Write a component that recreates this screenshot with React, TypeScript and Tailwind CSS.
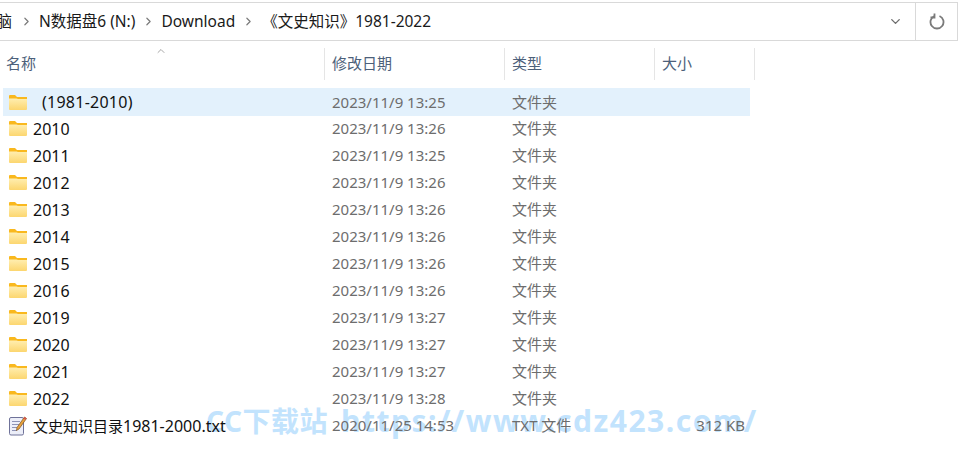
import React from 'react';
import { ChevronRight, ChevronDown, ChevronUp } from 'lucide-react';

const font = "font-['Noto_Sans','Noto_Sans_CJK_SC',sans-serif]";

interface Row {
  name: string;
  cjk?: string;
  date: string;
  type: string;
  size?: string;
  selected?: boolean;
  file?: boolean;
}

const rows: Row[] = [
  { name: '(1981-2010)', date: '2023/11/9 13:25', type: '文件夹', selected: true },
  { name: '2010', date: '2023/11/9 13:26', type: '文件夹' },
  { name: '2011', date: '2023/11/9 13:25', type: '文件夹' },
  { name: '2012', date: '2023/11/9 13:26', type: '文件夹' },
  { name: '2013', date: '2023/11/9 13:26', type: '文件夹' },
  { name: '2014', date: '2023/11/9 13:26', type: '文件夹' },
  { name: '2015', date: '2023/11/9 13:26', type: '文件夹' },
  { name: '2016', date: '2023/11/9 13:26', type: '文件夹' },
  { name: '2019', date: '2023/11/9 13:27', type: '文件夹' },
  { name: '2020', date: '2023/11/9 13:27', type: '文件夹' },
  { name: '2021', date: '2023/11/9 13:27', type: '文件夹' },
  { name: '2022', date: '2023/11/9 13:28', type: '文件夹' },
  { cjk: '文史知识目录', name: '1981-2000.txt', date: '2020/11/25 14:53', type: 'TXT 文件', size: '312 KB', file: true },
];

const FolderIcon = () => (
  <svg width="18" height="15" viewBox="0 0 18 15" className="shrink-0">
    <defs>
      <linearGradient id="folderFill" x1="0" y1="0" x2="0" y2="1">
        <stop offset="0" stopColor="#ffeeb0" />
        <stop offset="1" stopColor="#fcd66f" />
      </linearGradient>
    </defs>
    <path d="M0 1 Q0 0 1 0 H6 L8 2 H18 V5 H0 Z" fill="#f9b81e" />
    <path d="M0 3.5 H7.5 L9 4 H18 V14 Q18 15 17 15 H1 Q0 15 0 14 Z" fill="url(#folderFill)" />
  </svg>
);

const NoteIcon = () => (
  <svg width="18" height="20" viewBox="0 0 18 20" className="shrink-0">
    <rect x="0.5" y="1.5" width="14" height="17.5" rx="1.5" fill="#eceef8" stroke="#6f7299" />
    <path d="M3 5.5H11M3 8.5H10M3 11.5H8M3 14.5H8" stroke="#8e93b5" strokeWidth="1" />
    <path d="M15.5 1 L17.5 2.5 L10 13 L7.5 14.5 L8 11.5 Z" fill="#e8a33c" stroke="#7a4f1d" strokeWidth="0.7" />
    <path d="M15.5 1 L17.5 2.5 L16.5 4 L14.4 2.5 Z" fill="#d9534f" />
  </svg>
);

const RefreshIcon = () => (
  <svg width="16" height="17" viewBox="0 0 16 17" fill="none" className="text-[#7a7a7a]">
    <path d="M10.5 3 A6.5 6.5 0 1 1 5.5 3" stroke="currentColor" strokeWidth="1.8" />
    <path d="M5.5 0.5 V4.5 H1.5" stroke="currentColor" strokeWidth="1.8" />
  </svg>
);

const Crumb = ({ children }: { children: React.ReactNode }) => (
  <div className="flex items-center gap-[7px]">
    <span className="whitespace-nowrap">{children}</span>
    <ChevronRight className="w-[13px] h-[13px] text-[#7a7a7a]" strokeWidth={2.2} />
  </div>
);

const HeaderCell = ({ label, width, inset = 'pl-[7px]' }: { label: string; width: string; inset?: string }) => (
  <div className={`${width} ${inset} h-[32px] border-r border-[#e5e5e5] pb-[1px] flex items-center text-[15px] text-[#4c607a]`}>
    {label}
  </div>
);

export default function App() {
  return (
    <div className={`relative w-[962px] h-[453px] overflow-hidden bg-white ${font}`}>
      {/* Address bar */}
      <div className="pt-[2px] pr-[4px]">
        <div className="h-[39px] flex items-center border-t border-b border-r border-[#d9d9d9] text-[15.5px] text-[#1a1a1a]">
          <div className="flex-1 flex items-center min-w-0 overflow-hidden gap-[6px]">
            <Crumb><span className="block w-[13px] pr-[1px] text-right" dir="rtl">脑</span></Crumb>
            <Crumb>N数据盘6 (N:)</Crumb>
            <Crumb>Download</Crumb>
            <span className="whitespace-nowrap ml-[1px]">《文史知识》1981-2022</span>
          </div>
          <ChevronDown className="w-[15px] h-[15px] mr-[12px] text-[#6d6d6d]" strokeWidth={2.2} />
          <div className="w-[42px] h-full border-l border-[#d9d9d9] flex items-center justify-center">
            <RefreshIcon />
          </div>
        </div>
      </div>

      {/* Column headers */}
      <div className="relative mt-[7px] flex">
        <ChevronUp className="absolute left-[155px] -top-[3px] w-[12px] h-[12px] text-[#8a8a8a]" strokeWidth={1.5} />
        <HeaderCell label="名称" width="w-[325px]" inset="pl-[6px]" />
        <HeaderCell label="修改日期" width="w-[180px]" />
        <HeaderCell label="类型" width="w-[150px]" />
        <HeaderCell label="大小" width="w-[100px]" />
      </div>

      {/* File list */}
      <div className="relative z-10 mt-[8px] ml-[3px] w-[747px] flex flex-col">
        {rows.map((row) => (
          <div
            key={row.name}
            className={`flex items-center text-[15px] ${row.selected ? 'h-[28px] -mb-[1px] bg-[#e3f1fc]' : 'h-[27px]'}`}
          >
            <div className="w-[322px] pl-[6px] flex items-center gap-[6px] text-[#111111] whitespace-pre">
              {row.file ? <NoteIcon /> : <FolderIcon />}
              <span className={`text-[16px] ${row.selected ? 'pl-[9px] tracking-[0.25px]' : ''}`}>
                {row.cjk && <span className="text-[15px]">{row.cjk}</span>}
                {row.name}
              </span>
            </div>
            <div className="w-[180px] pl-[7px] text-[#6d6d6d]">{row.date}</div>
            <div className="w-[150px] pl-[7px] text-[#6d6d6d]">{row.type}</div>
            <div className="w-[95px] text-right pr-[5px] text-[#6d6d6d]">{row.size}</div>
          </div>
        ))}
      </div>

      {/* Watermark */}
      <div className="absolute left-[206px] top-[399px] flex items-center gap-[13px] font-bold leading-[44px] text-[#c2e3fd] whitespace-nowrap">
        <span className="text-[28px] tracking-[0.5px]">CC下载站</span>
        <span className="text-[30px] tracking-[1.5px]">https://www.cdz423.com/</span>
      </div>
    </div>
  );
}
